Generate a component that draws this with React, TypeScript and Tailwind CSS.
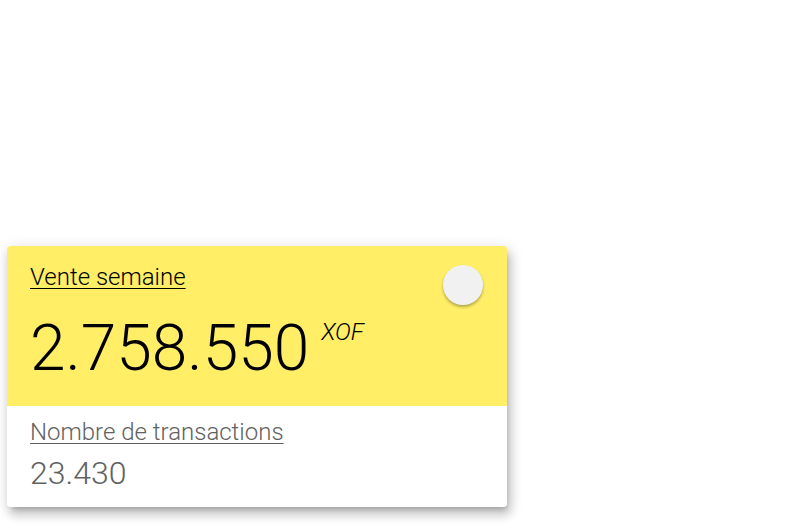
export default function App() {
  return (
    <div className="w-[789px] h-[532px] bg-white font-['Roboto',sans-serif] overflow-hidden">
      <div className="ml-[7px] mt-[246px] w-[500px] rounded-[4px] overflow-hidden shadow-[3px_8px_10px_1px_rgba(0,0,0,0.14),2px_3px_14px_2px_rgba(0,0,0,0.12),2px_5px_5px_-3px_rgba(0,0,0,0.2)]">
        <div className="h-[160px] bg-[#ffee66] px-[23px] pt-[17px] flex justify-between">
          <div>
            <div className="text-[24px] leading-[28px] font-light text-black underline underline-offset-[3px] decoration-1">
              Vente semaine
            </div>
            <div className="mt-[20px] flex items-start">
              <span className="text-[64px] leading-[76px] font-light text-black">2.758.550</span>
              <span className="ml-[12px] mt-[7px] text-[24px] leading-[28px] font-light italic text-black">XOF</span>
            </div>
          </div>
          <div className="mt-[2px] mr-[1px] w-[40px] h-[40px] rounded-full bg-[#f1f1f1] shadow-[0_2px_3px_rgba(0,0,0,0.3)]" />
        </div>
        <div className="h-[101px] bg-white px-[23px] pt-[12px]">
          <div className="text-[24px] leading-[28px] font-light text-[#616161] underline underline-offset-[3px] decoration-1">
            Nombre de transactions
          </div>
          <div className="mt-[7px] text-[32px] leading-[40px] font-light text-[#616161]">23.430</div>
        </div>
      </div>
    </div>
  );
}
